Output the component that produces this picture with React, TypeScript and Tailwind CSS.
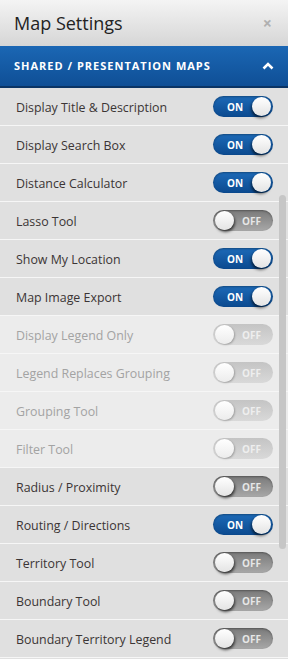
import React from 'react';

type Setting = { label: string; on: boolean; disabled?: boolean };

const SETTINGS: Setting[] = [
    { label: 'Display Title & Description', on: true },
    { label: 'Display Search Box', on: true },
    { label: 'Distance Calculator', on: true },
    { label: 'Lasso Tool', on: false },
    { label: 'Show My Location', on: true },
    { label: 'Map Image Export', on: true },
    { label: 'Display Legend Only', on: false, disabled: true },
    { label: 'Legend Replaces Grouping', on: false, disabled: true },
    { label: 'Grouping Tool', on: false, disabled: true },
    { label: 'Filter Tool', on: false, disabled: true },
    { label: 'Radius / Proximity', on: false },
    { label: 'Routing / Directions', on: true },
    { label: 'Territory Tool', on: false },
    { label: 'Boundary Tool', on: false },
    { label: 'Boundary Territory Legend', on: false },
];

const Toggle = ({ on, disabled }: { on: boolean; disabled?: boolean }) => {
    if (on) {
        return (
            <div className="w-[60px] h-[21px] rounded-full bg-gradient-to-b from-[#1d6ab8] to-[#0b4a8f] flex items-center justify-between pl-[14px] pr-[2px] shadow-[inset_0_1px_2px_rgba(0,0,0,0.3)]">
                <span className="text-[10px] font-bold text-white leading-none">ON</span>
                <div className="w-[19px] h-[19px] rounded-full bg-gradient-to-b from-white to-[#e4e4e4] shadow-[-1px_2px_3px_rgba(0,0,0,0.6)]" />
            </div>
        );
    }
    if (disabled) {
        return (
            <div className="w-[60px] h-[21px] rounded-full bg-gradient-to-b from-[#c4c4c4] to-[#d9d9d9] flex items-center justify-between pl-[2px] pr-[12px]">
                <div className="w-[19px] h-[19px] rounded-full bg-gradient-to-b from-white to-[#ececec] shadow-[1px_1px_2px_rgba(0,0,0,0.25)]" />
                <span className="text-[10px] font-bold text-[#eeeeee] leading-none">OFF</span>
            </div>
        );
    }
    return (
        <div className="w-[60px] h-[21px] rounded-full bg-gradient-to-b from-[#7a7a7a] to-[#a8a8a8] flex items-center justify-between pl-[2px] pr-[12px] shadow-[inset_0_1px_2px_rgba(0,0,0,0.3)]">
            <div className="w-[19px] h-[19px] rounded-full bg-gradient-to-b from-white to-[#e4e4e4] shadow-[1px_2px_3px_rgba(0,0,0,0.7)]" />
            <span className="text-[10px] font-bold text-[#e6e6e6] leading-none">OFF</span>
        </div>
    );
};

export default function App() {
    return (
        <div className="w-[288px] h-[659px] overflow-hidden relative bg-[#e0e0e0] font-['Open_Sans',sans-serif]">
            {/* Title bar */}
            <div className="h-[46px] bg-gradient-to-b from-[#f4f4f4] to-[#d6d6d6] flex items-center justify-between pl-[14px] pr-[16px]">
                <h1 className="text-[18px] text-[#222] leading-none">Map Settings</h1>
                <span className="text-[16px] font-bold text-[#b0b0b0] leading-none">×</span>
            </div>

            {/* Section header */}
            <div className="h-[42px] bg-gradient-to-b from-[#1b67b4] to-[#0f4f96] border-b-2 border-[#0a3465] flex items-center justify-between pl-[14px] pr-[14px]">
                <span className="text-[11px] font-bold text-white tracking-[1px]">SHARED / PRESENTATION MAPS</span>
                <svg width="12" height="8" viewBox="0 0 12 8">
                    <path d="M1.5 6.5 L6 2 L10.5 6.5" stroke="white" strokeWidth="2.6" fill="none" strokeLinejoin="miter" />
                </svg>
            </div>

            {/* Settings rows */}
            <div className="flex flex-col">
                {SETTINGS.map(s => (
                    <div
                        key={s.label}
                        className={`h-[38px] flex items-center justify-between pl-[16px] pr-[15px] border-b border-[#f6f6f6] ${s.disabled ? 'bg-[#ececec]' : 'bg-[#e0e0e0]'}`}
                    >
                        <span className={`text-[12.4px] font-medium pt-[3px] ${s.disabled ? 'text-[#a3a3a3]' : 'text-[#3b3535]'}`}>{s.label}</span>
                        <Toggle on={s.on} disabled={s.disabled} />
                    </div>
                ))}
            </div>

            {/* Scroll thumb */}
            <div className="absolute left-[279px] top-[195px] w-[7px] h-[354px] rounded-full bg-[#c6c6c6]" />
        </div>
    );
}
